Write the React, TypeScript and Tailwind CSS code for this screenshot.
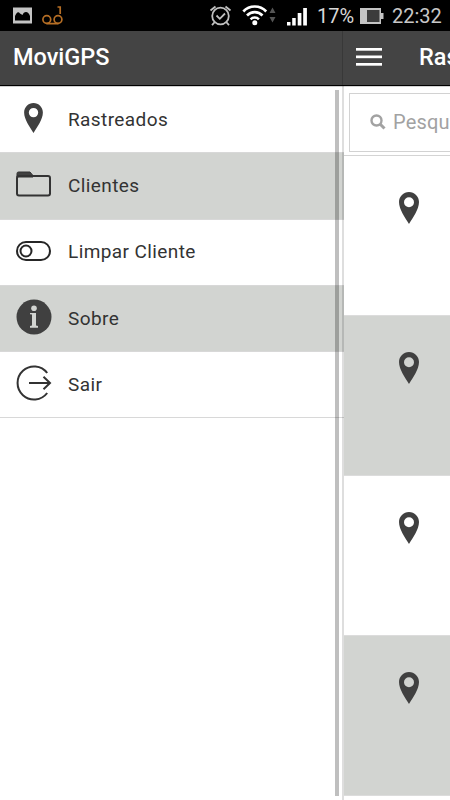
import type { ReactNode } from 'react';

type MenuItem = {
  label: string;
  icon: ReactNode;
};

function PinIcon({ className }: { className?: string }) {
  return (
    <svg viewBox="0 0 20 32" className={className} fill="#404040">
      <path
        fillRule="evenodd"
        d="M10 0C4.500 0 0 4.500 0 10c0 7.500 6.200 15.500 10 22 3.800-6.500 10-14.500 10-22C20 4.500 15.500 0 10 0Zm0 5.200a5 5 0 1 1 0 10 5 5 0 0 1 0-10Z"
      />
    </svg>
  );
}

function FolderIcon() {
  return (
    <svg width="35" height="26" viewBox="0 0 35 26" fill="none">
      <path d="M1 6V2.500Q1 1 2.500 1H14l3 3.600V6Z" fill="#404040" stroke="#333333" />
      <rect x="1" y="5" width="33" height="19.500" rx="2" stroke="#333333" strokeWidth="2" />
    </svg>
  );
}

function ToggleIcon() {
  return (
    <svg width="35" height="20" viewBox="0 0 35 20" fill="none" stroke="#262626" strokeWidth="2">
      <rect x="1" y="1" width="33" height="18" rx="9" />
      <circle cx="10" cy="10" r="5.500" />
    </svg>
  );
}

function InfoIcon() {
  return (
    <svg width="36" height="36" viewBox="0 0 36 36">
      <circle cx="18" cy="18" r="17.500" fill="#404040" />
      <circle cx="18" cy="9.200" r="2.800" fill="#d2d4d1" />
      <path d="M14 14h6v12.500l2 .5v1.700h-8V27l2-.5v-11l-2-.3Z" fill="#d2d4d1" />
    </svg>
  );
}

function ExitIcon() {
  return (
    <svg width="36" height="36" viewBox="0 0 36 36" fill="none" stroke="#333333" strokeWidth="2">
      <path d="M31.200 8A16.500 16.500 0 1 0 31.200 28" />
      <path d="M13 18h21M27.500 11.800l6.500 6.200-6.500 6.200" />
    </svg>
  );
}

const MENU: MenuItem[] = [
  { label: 'Rastreados', icon: <PinIcon className="h-[30px] w-[19px]" /> },
  { label: 'Clientes', icon: <FolderIcon /> },
  { label: 'Limpar Cliente', icon: <ToggleIcon /> },
  { label: 'Sobre', icon: <InfoIcon /> },
  { label: 'Sair', icon: <ExitIcon /> },
];

function StatusBar() {
  return (
    <div className="flex h-[31px] shrink-0 items-center bg-black text-[20px] text-[#c8c8c8]">
      <svg width="208" height="31" viewBox="0 0 208 31" className="shrink-0">
        <rect x="13" y="7.500" width="19" height="16" fill="#c4c4c4" />
        <path d="M15 20.500v-4.500q2.500-6 5-2.500l2.500 1.500q1-3 3.500-3 2.500 0 4 4v4.500Z" fill="#000000" />
        <g fill="none" stroke="#b56e25" strokeWidth="1.700">
          <circle cx="46.800" cy="19.500" r="3.900" />
          <circle cx="58" cy="19.500" r="3.900" />
          <path d="M46.500 23.600h12M57.500 7h2.700v7" />
        </g>
      </svg>
      <svg width="108" height="31" viewBox="208 0 108 31" className="shrink-0" fill="none">
        <g stroke="#c0c0c0" strokeWidth="1.800">
          <circle cx="220.500" cy="16" r="8.300" />
          <path d="M216.500 15.500l3.300 3.300 5.200-5.300M210.500 10.500l5-4M230.500 10.500l-5-4M214.800 22l-2.800 3.200M226.200 22l2.800 3.200" />
        </g>
        <g stroke="#ffffff" strokeWidth="2.600">
          <path d="M243.300 11.500a15.500 15.500 0 0 1 22.900 0M247 15.500a10.500 10.500 0 0 1 15.500 0M250.600 19.300a5.800 5.800 0 0 1 8.300 0" />
        </g>
        <circle cx="254.800" cy="22.700" r="2.500" fill="#ffffff" />
        <path d="M269.500 13l3-5.500 3 5.500ZM269.500 17l3 5.500 3-5.500Z" fill="#555555" />
        <g fill="#ffffff">
          <rect x="287" y="22" width="3.500" height="3.500" />
          <rect x="292.200" y="18" width="3.500" height="7.500" />
          <rect x="297.700" y="13" width="3.700" height="12.500" />
          <rect x="303.200" y="8" width="3.700" height="17.500" />
        </g>
      </svg>
      <span className="w-[44px] shrink-0 pl-[1px] text-[#d8d8d8]">17%</span>
      <svg width="24" height="18" viewBox="0 0 24 18" className="shrink-0">
        <rect x="0" y="1" width="21" height="16" fill="#c4c4c4" />
        <rect x="21" y="6" width="2.500" height="6" fill="#c4c4c4" />
        <rect x="7" y="3" width="12.500" height="12" fill="#3c3c3c" />
      </svg>
      <span className="pl-[8px]">22:32</span>
    </div>
  );
}

function Drawer() {
  return (
    <aside className="relative w-[344px] shrink-0 bg-white">
      <ul className="border-t border-[#d0d0d0]">
        {MENU.map((item, i) => (
          <li
            key={item.label}
            className={`flex h-[66.300px] items-center border-b border-[#d8d8d8] ${
              i % 2 === 1 ? 'bg-[#d2d4d1]' : ''
            }`}
          >
            <span className="mb-[3px] flex w-[67px] shrink-0 justify-center">{item.icon}</span>
            <span className="pt-px pl-px text-[19px] tracking-[0.400px] text-[#333333]">{item.label}</span>
          </li>
        ))}
      </ul>
      {/* Scroll indicator and panel shadow sit over the list */}
      <div className="absolute top-[4px] bottom-[4px] left-[335px] w-[4px] bg-black/25" />
      <div className="absolute top-0 bottom-0 left-[342px] w-[2px] bg-black/13" />
    </aside>
  );
}

function TrackedList() {
  return (
    <main className="min-w-0 flex-1 bg-white">
      <div className="h-[70px] border-t border-b border-[#d4d4d4] pt-[6px] pl-[5px]">
        <div className="flex h-[59px] w-[320px] items-center border border-[#d2d2d2] pb-[2px] pl-[20px] text-[#a2a2a2]">
          <svg width="16" height="16" viewBox="0 0 16 16" fill="none" stroke="currentColor">
            <circle cx="6.500" cy="6.500" r="5" strokeWidth="2.400" />
            <path d="M10 10l4.500 4.500" strokeWidth="3" />
          </svg>
          <span className="pl-[7px] text-[20px] tracking-[0.200px]">Pesquisar</span>
        </div>
      </div>
      {[0, 1, 2, 3].map((row) => (
        <div
          key={row}
          className={`flex h-[160px] border-b border-[#dcdcdc] pt-[36px] pl-[55px] ${
            row % 2 === 1 ? 'bg-[#d2d4d1]' : ''
          }`}
        >
          <PinIcon className="h-[32px] w-[20px]" />
        </div>
      ))}
    </main>
  );
}

export default function App() {
  return (
    <div className="flex h-[800px] w-[450px] flex-col overflow-hidden bg-white font-['Roboto',sans-serif]">
      <StatusBar />
      <header className="flex h-[55px] shrink-0 border-b border-black bg-[#444444] text-[23.500px] font-medium text-white">
        <div className="flex w-[343px] shrink-0 items-center border-r border-[#383838] pl-[13px]">MoviGPS</div>
        <div className="flex items-center pl-[13px]">
          <svg width="26" height="20" viewBox="0 0 26 20" className="mb-[2px] shrink-0" fill="#ffffff">
            <rect y="1" width="26" height="2.700" />
            <rect y="8.500" width="26" height="2.700" />
            <rect y="16" width="26" height="2.700" />
          </svg>
          <span className="pl-[37px]">Rastreados</span>
        </div>
      </header>
      <div className="flex min-h-0 flex-1">
        <Drawer />
        <TrackedList />
      </div>
    </div>
  );
}
